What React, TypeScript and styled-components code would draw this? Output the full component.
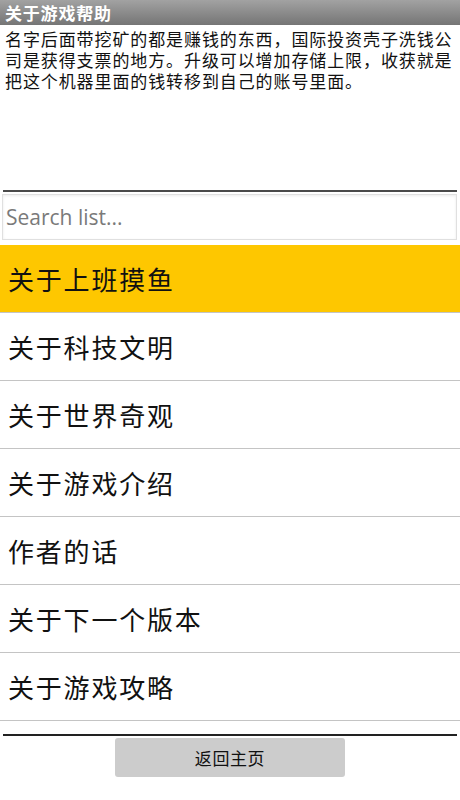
import styled, { createGlobalStyle } from "styled-components";

const GlobalStyle = createGlobalStyle`
	html, body {
		margin: 0;
		padding: 0;
		background: #ffffff;
	}
	body {
		font-family: "Noto Sans CJK SC", "Noto Sans", sans-serif;
	}
`;

const Page = styled.div`
	display: flex;
	flex-direction: column;
	width: 460px;
	height: 800px;
	overflow: hidden;
	background: #ffffff;
`;

const TitleBar = styled.div`
	display: flex;
	align-items: center;
	height: 25px;
	padding: 0 5px;
	background: linear-gradient(#a2a2a2, #757575);
	color: #ffffff;
	font-size: 17px;
	font-weight: 700;
	letter-spacing: 0.8px;
`;

const Description = styled.p`
	margin: 0;
	height: 165px;
	padding: 3px 4px 0 5px;
	box-sizing: border-box;
	font-size: 17px;
	line-height: 21px;
	letter-spacing: 0.9px;
	color: #111111;
`;

const Rule = styled.div<{ $tone: string }>`
	height: 2px;
	margin: 0 3px;
	background: ${props => props.$tone};
`;

const SearchWrap = styled.div`
	padding: 2px 3px 5px 2px;
`;

const SearchInput = styled.input`
	display: block;
	width: 100%;
	height: 46px;
	box-sizing: border-box;
	border: 1px solid #e0e0e0;
	box-shadow: inset 0 1px 3px rgba(0, 0, 0, 0.08);
	padding: 0 3px;
	font-family: "Open Sans", "Noto Sans", sans-serif;
	font-size: 21px;
	color: #333333;
	outline: none;

	&::placeholder {
		color: #7a7a7a;
	}
`;

const List = styled.ul`
	list-style: none;
	margin: 0;
	padding: 0;
`;

const Item = styled.li<{ $active?: boolean }>`
	display: flex;
	align-items: center;
	height: 67px;
	padding: 0 8px;
	border-bottom: 1px solid #c4c4c4;
	background: ${props => (props.$active ? "#fec700" : "#ffffff")};
	font-size: 26px;
	letter-spacing: 1.8px;
	color: #111111;
`;

const Footer = styled.div`
	display: flex;
	flex-direction: column;
	padding-top: 13px;
`;

const ButtonRow = styled.div`
	display: flex;
	justify-content: center;
	padding-top: 2px;
`;

const BackButton = styled.button`
	width: 230px;
	height: 39px;
	border: none;
	border-radius: 3px;
	background: #cccccc;
	font-family: "Noto Sans CJK SC", "Noto Sans", sans-serif;
	font-size: 17px;
	letter-spacing: 0.6px;
	color: #111111;
`;

const items = [
	"关于上班摸鱼",
	"关于科技文明",
	"关于世界奇观",
	"关于游戏介绍",
	"作者的话",
	"关于下一个版本",
	"关于游戏攻略",
];

export default function App(): JSX.Element {
	return (
		<Page>
			<GlobalStyle />
			<TitleBar>关于游戏帮助</TitleBar>
			<Description>
				名字后面带挖矿的都是赚钱的东西，国际投资壳子洗钱公司是获得支票的地方。升级可以增加存储上限，收获就是把这个机器里面的钱转移到自己的账号里面。
			</Description>
			<Rule $tone="#4a4a4a" />
			<SearchWrap>
				<SearchInput placeholder="Search list..." />
			</SearchWrap>
			<List>
				{items.map((name, i) => (
					<Item key={name} $active={i === 0}>{name}</Item>
				))}
			</List>
			<Footer>
				<Rule $tone="#222222" />
				<ButtonRow>
					<BackButton>返回主页</BackButton>
				</ButtonRow>
			</Footer>
		</Page>
	);
}
